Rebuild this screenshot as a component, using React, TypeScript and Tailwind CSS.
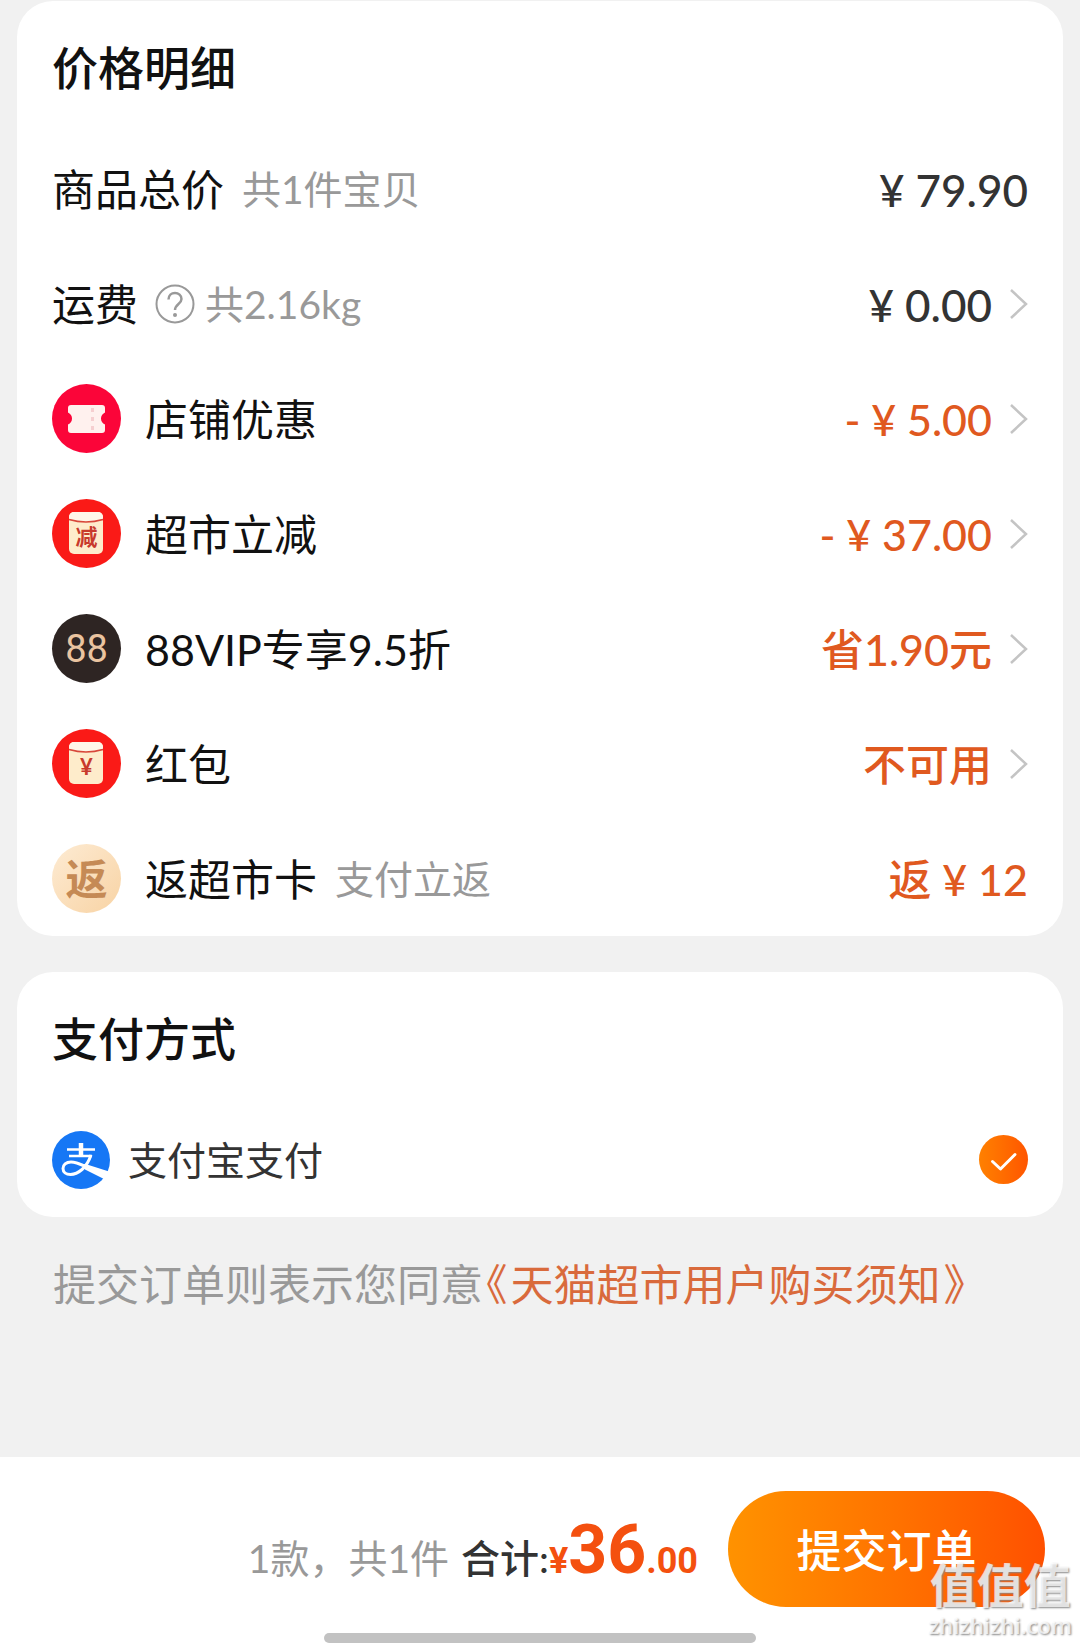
import { ReactNode, useState } from 'react'

type PriceRow = {
  label: string
  note?: string
  help?: boolean
  icon?: ReactNode
  value: string
  highlight?: boolean
  link?: boolean
}

function Coupon() {
  return (
    <svg viewBox="0 0 69 69" className="size-[69px] shrink-0" aria-hidden="true">
      <circle cx="34.500" cy="34.500" r="34.500" fill="#fb0539" />
      <path d="M19 21H50a3 3 0 0 1 3 3v4.500q-4 2-4 6t4 6V46a3 3 0 0 1-3 3H19a3 3 0 0 1-3-3v-5.500q4-2 4-6t-4-6V24a3 3 0 0 1 3-3Z" fill="#fff1ee" />
      <path d="M40.500 24v22" stroke="#f6cfd0" strokeWidth="3" strokeDasharray="4 5" />
    </svg>
  )
}

function Envelope({ mark }: { mark: string }) {
  return (
    <span className="grid size-[69px] shrink-0 place-items-center">
      <svg viewBox="0 0 69 69" className="col-start-1 row-start-1 size-[69px]" aria-hidden="true">
        <circle cx="34.500" cy="34.500" r="34.500" fill="#fa1a17" />
        <rect x="17" y="13" width="34" height="42" rx="5" fill="#feeccb" />
        <path d="M17 20v-2a5 5 0 0 1 5-5h24a5 5 0 0 1 5 5v2q-17 5-34 0Z" fill="#fff6e8" />
        <path d="M17 20.500q17 5 34 0" fill="none" stroke="#d8473a" strokeWidth="1.500" />
      </svg>
      <span className="col-start-1 row-start-1 pt-1.5 text-[22px] leading-6 font-bold text-[#c83a2c]">{mark}</span>
    </span>
  )
}

function Vip() {
  return (
    <span className="grid size-[69px] shrink-0 place-items-center rounded-full bg-[#2e2523] font-['Roboto',sans-serif] text-[38px] leading-10 text-[#eac4a0]">88</span>
  )
}

function Rebate() {
  return (
    <span className="grid size-[69px] shrink-0 place-items-center rounded-full bg-linear-to-br from-[#fdebd3] to-[#f8d3a4] text-[42px] leading-10 font-bold text-[#c58a55]">返</span>
  )
}

function Alipay() {
  return (
    <svg viewBox="0 0 58 58" className="size-[58px] shrink-0" fill="none" stroke="#fff" aria-hidden="true">
      <circle cx="29" cy="29" r="29" fill="#1677f5" stroke="none" />
      <path d="M15 18.500h28M17 25h23" strokeWidth="2.500" />
      <path d="M29 12v13" strokeWidth="4.500" />
      <path d="M39 24c-2 6-5 11-9 14.500-4 3.500-8 5-11.500 5-4.500 0-7.500-2.500-7.500-6s3-6.500 8-6.500c4 0 8 1.500 13 4" strokeWidth="3" />
      <path d="M29 32.500l6 1 22 7-4 8-20-10Z" fill="#fff" stroke="none" />
    </svg>
  )
}

const rows: PriceRow[] = [
  { label: '商品总价', note: '共1件宝贝', value: '¥ 79.90' },
  { label: '运费', help: true, note: '共2.16kg', value: '¥ 0.00', link: true },
  { label: '店铺优惠', icon: <Coupon />, value: '- ¥ 5.00', highlight: true, link: true },
  { label: '超市立减', icon: <Envelope mark="减" />, value: '- ¥ 37.00', highlight: true, link: true },
  { label: '88VIP专享9.5折', icon: <Vip />, value: '省1.90元', highlight: true, link: true },
  { label: '红包', icon: <Envelope mark="¥" />, value: '不可用', highlight: true, link: true },
  { label: '返超市卡', note: '支付立返', icon: <Rebate />, value: '返 ¥ 12', highlight: true },
]

function Help() {
  return (
    <svg viewBox="0 0 40 40" className="ml-[17px] size-10 shrink-0" fill="none" stroke="#999" strokeWidth="2" aria-hidden="true">
      <circle cx="20" cy="20" r="18.500" />
      <path d="M13.500 15.500c0-4 3-6.500 6.500-6.500s6.500 2.500 6.500 6c0 5-6.500 5-6.500 11" strokeWidth="2.500" />
      <circle cx="20" cy="31" r="2" fill="#999" stroke="none" />
    </svg>
  )
}

function Chevron() {
  return (
    <svg viewBox="0 0 18 30" className="ml-[18px] h-[30px] w-[18px] shrink-0" fill="none" stroke="#c4c4c4" strokeWidth="2.500" aria-hidden="true">
      <path d="M1 1l15 14L1 29" />
    </svg>
  )
}

function Row({ row }: { row: PriceRow }) {
  const content = (
    <>
      {row.icon && <span className="mr-6 flex">{row.icon}</span>}
      <span className="pt-0.5 text-[43px] leading-[60px] text-[#111]">{row.label}</span>
      {row.help && <Help />}
      {row.note && <span className={`text-[39px] leading-[60px] text-[#999] ${row.help ? 'ml-[10px]' : 'ml-[18px]'}`}>{row.note}</span>}
      <span className={`ml-auto pt-0.5 leading-[60px] font-medium ${row.highlight ? 'text-[43px] text-[#e0591f]' : 'text-[44px] text-[#333]'}`}>{row.value}</span>
      {row.link && <Chevron />}
    </>
  )
  return (
    <li>
      {row.link ? (
        <button type="button" className="flex h-[115px] w-full items-center text-left whitespace-nowrap">{content}</button>
      ) : (
        <div className="flex h-[115px] items-center whitespace-nowrap">{content}</div>
      )}
    </li>
  )
}

function Card({ title, children }: { title: string; children: ReactNode }) {
  return (
    <section className="rounded-[36px] bg-white px-[35px]">
      <h2 className="flex h-[130px] items-center pt-1 text-[46px] leading-[60px] font-medium text-[#111]">{title}</h2>
      {children}
    </section>
  )
}

export default function App() {
  const [method, setMethod] = useState('alipay')

  return (
    <div className="relative flex min-h-screen flex-col overflow-hidden bg-[#f1f1f1] font-['Lato','Noto_Sans_CJK_SC',sans-serif]">
      <main className="flex flex-col gap-9 px-[17px] pt-px">
        <Card title="价格明细">
          <ul>
            {rows.map((row) => (
              <Row key={row.label} row={row} />
            ))}
          </ul>
        </Card>
        <Card title="支付方式">
          <label className="flex h-[115px] items-center">
            <Alipay />
            <span className="ml-[18px] text-[39px] leading-[60px] text-[#333]">支付宝支付</span>
            <span className="ml-auto grid place-items-center">
              <input
                type="radio"
                name="payment"
                value="alipay"
                checked={method === 'alipay'}
                onChange={(event) => setMethod(event.target.value)}
                className="col-start-1 row-start-1 size-[49px] appearance-none rounded-full bg-linear-to-r from-[#ff8000] to-[#ff5500]"
              />
              <svg viewBox="0 0 49 49" className="pointer-events-none col-start-1 row-start-1 size-[49px]" fill="none" stroke="#fff" strokeWidth="3" strokeLinecap="round" strokeLinejoin="round" aria-hidden="true">
                <path d="M13.500 26.500l8 7.500 14.500-14.500" />
              </svg>
            </span>
          </label>
        </Card>
        <p className="px-9 pt-0.5 text-[43px] leading-[60px] whitespace-nowrap text-[#999]">
          提交订单则表示您同意
          <a href="#terms" className="text-[#d96a3c]">
            <span className="px-[3px] [font-feature-settings:'halt']">《</span>
            天猫超市用户购买须知
            <span className="px-[3px] [font-feature-settings:'halt']">》</span>
          </a>
        </p>
      </main>

      <footer className="mt-auto bg-white pt-[34px]">
        <div className="flex h-[116px] items-center justify-end pr-[35px] whitespace-nowrap">
          <p className="mr-[30px] flex items-baseline pt-3 text-[39px] leading-[60px]">
            <span className="text-[#999]">1款，共1件</span>
            <span className="ml-3 font-medium text-[#333]">合计:</span>
            <span className="flex items-baseline font-['Roboto','Noto_Sans_CJK_SC',sans-serif] font-bold text-[#f4500f]">
              <span className="text-[36px]">¥</span>
              <span className="text-[68px]">36</span>
              <span className="text-[36px]">.00</span>
            </span>
          </p>
          <button type="button" className="h-[116px] w-[317px] rounded-full bg-linear-to-r from-[#ff9200] to-[#ff5000] pt-1 text-[45px] leading-[60px] font-medium text-white">提交订单</button>
        </div>
        <div className="mx-auto mt-[26px] h-[10px] w-[432px] rounded-full bg-[#c2c2c2]" />
      </footer>

      <div className="pointer-events-none absolute right-2 bottom-1 text-center text-white/75 [text-shadow:1px_1px_2px_#888]">
        <p className="text-[47px] leading-[52px] font-bold">值值值</p>
        <p className="font-['Open_Sans',sans-serif] text-[22px] leading-7 font-semibold">zhizhizhi.com</p>
      </div>
    </div>
  )
}
